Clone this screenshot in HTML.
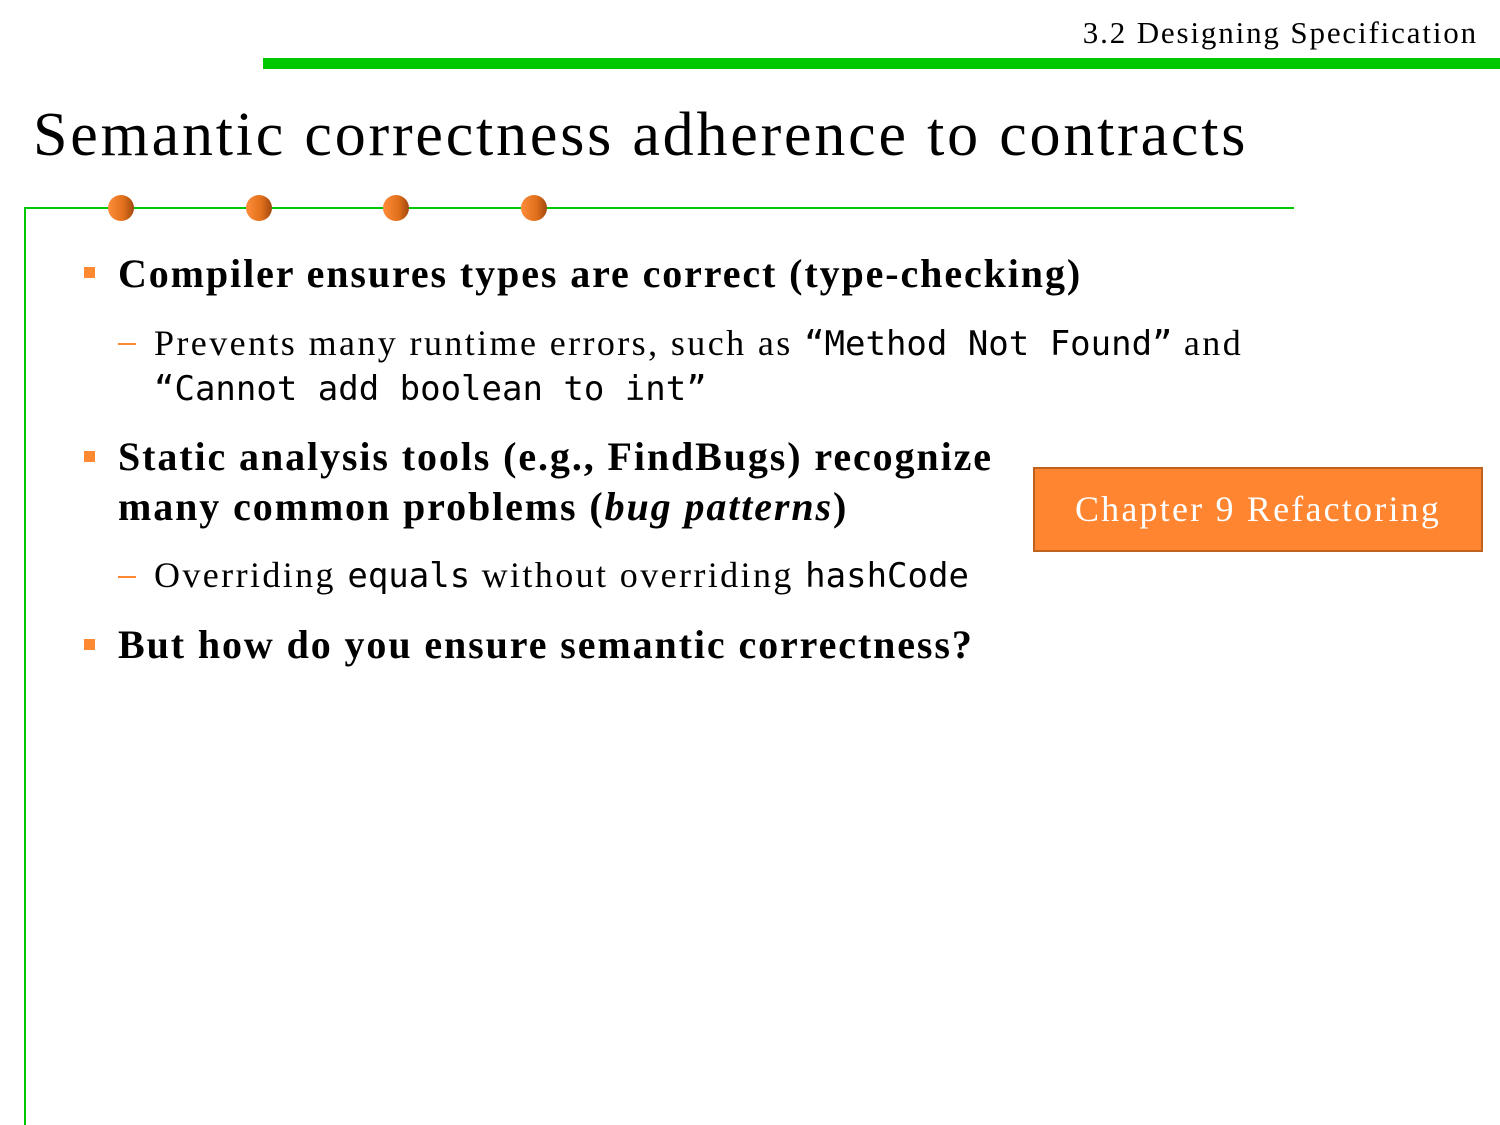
<!DOCTYPE html>
<html><head><meta charset="utf-8"><style>
body{margin:0;width:1500px;height:1125px;background:#fff;position:relative;overflow:hidden;font-family:"Liberation Serif",serif;color:#000}
.a{position:absolute;white-space:nowrap;line-height:1}
.b{font-weight:bold;font-size:40px;letter-spacing:1.9px}
.s{font-size:36px;letter-spacing:2.4px}
.m{font-family:"DejaVu Sans Mono","Liberation Mono",monospace;font-size:34px;letter-spacing:0}
.sq{position:absolute;width:11px;height:11px;background:#ff8833}
.dash{position:absolute;width:18px;height:2px;background:#ff8833}
.dot{position:absolute;width:26px;height:26px;border-radius:50%;background:linear-gradient(90deg,#ff8c3a,#e0701c 60%,#a0480f)}
</style></head><body>
<div class="a" style="right:22px;top:17px;font-size:31px;letter-spacing:1.85px">3.2 Designing Specification</div>
<div style="position:absolute;left:263px;top:58px;width:1237px;height:11px;background:#00c800"></div>
<div class="a" style="left:33px;top:104px;font-size:62px;letter-spacing:2.8px">Semantic correctness adherence to contracts</div>
<div style="position:absolute;left:24px;top:207px;width:1270px;height:2px;background:#00c800"></div>
<div style="position:absolute;left:24px;top:207px;width:2px;height:918px;background:#00c800"></div>
<div class="dot" style="left:108px;top:195px"></div>
<div class="dot" style="left:246px;top:195px"></div>
<div class="dot" style="left:383px;top:195px"></div>
<div class="dot" style="left:521px;top:195px"></div>

<div class="sq" style="left:84px;top:267px"></div>
<div class="a b" style="left:118px;top:254px">Compiler ensures types are correct (type-checking)</div>
<div class="dash" style="left:118px;top:343px"></div>
<div class="a s" style="left:154px;top:325px">Prevents many runtime errors, such as <span class="m">“Method Not Found”</span> and</div>
<div class="a s" style="left:154px;top:370px"><span class="m">“Cannot add boolean to int”</span></div>

<div class="sq" style="left:84px;top:451px"></div>
<div class="a b" style="left:118px;top:437px">Static analysis tools (e.g., FindBugs) recognize</div>
<div class="a b" style="left:118px;top:487px">many common problems (<i>bug patterns</i>)</div>
<div class="dash" style="left:118px;top:576px"></div>
<div class="a s" style="left:154px;top:557px">Overriding <span class="m">equals</span> without overriding <span class="m">hashCode</span></div>

<div class="sq" style="left:84px;top:639px"></div>
<div class="a b" style="left:118px;top:625px">But how do you ensure semantic correctness?</div>

<div style="position:absolute;left:1033px;top:467px;width:446px;height:81px;background:#ff8530;border:2px solid #c0621f;color:#fff;font-size:36px;letter-spacing:2.2px;line-height:81px;text-align:center">Chapter 9 Refactoring</div>
</body></html>
